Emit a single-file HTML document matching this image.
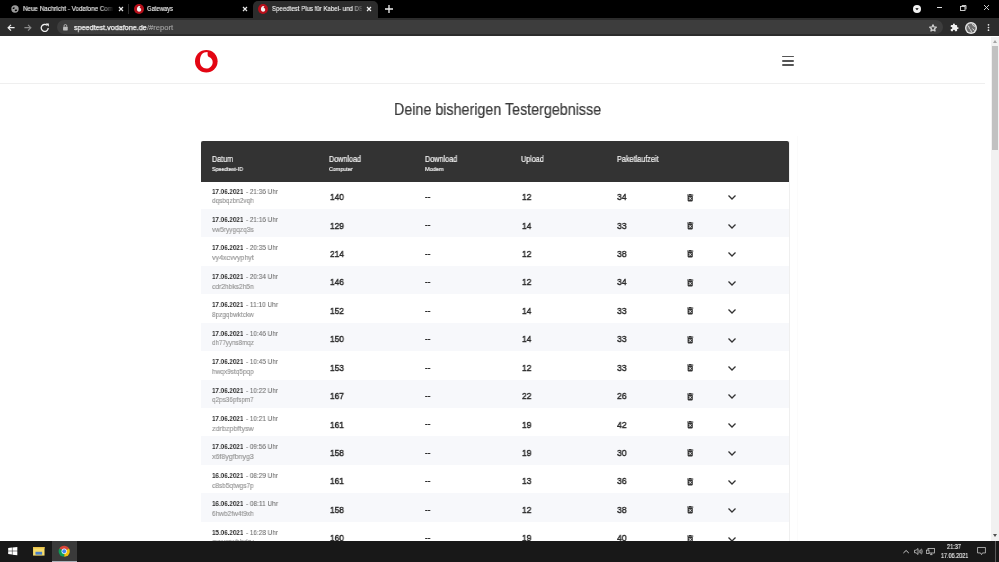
<!DOCTYPE html>
<html><head><meta charset="utf-8">
<style>
*{margin:0;padding:0;box-sizing:border-box}
html,body{width:999px;height:562px;overflow:hidden;background:#fff;font-family:"Liberation Sans",sans-serif}
.abs{position:absolute}
.t{position:absolute;white-space:nowrap;line-height:1;will-change:transform}
svg{position:absolute;overflow:visible}
</style></head>
<body>

<div class="abs" style="left:0;top:0;width:999px;height:18px;background:#000"></div>
<div class="abs" style="left:253px;top:1px;width:125px;height:17px;background:#2c2c2c;border-radius:5px 5px 0 0"></div>
<svg style="left:10.95px;top:5px" width="8" height="8" viewBox="0 0 8 8"><circle cx="4" cy="4" r="3.7" fill="#9a9a9a"/><ellipse cx="2.7" cy="3.1" rx="1.1" ry="0.8" fill="#000" transform="rotate(-30 2.7 3.1)"/><ellipse cx="4.9" cy="5.3" rx="1.2" ry="0.75" fill="#000" transform="rotate(-20 4.9 5.3)"/></svg>
<div class="t" style="left:23.00px;top:5.27px;font-size:7.00px;color:#e8e8e8;font-weight:normal;transform:scaleX(0.8931);transform-origin:0 0;-webkit-text-stroke:0.15px #e8e8e8;">Neue Nachricht - Vodafone Com</div>
<div class="abs" style="left:100px;top:2px;width:14px;height:14px;background:linear-gradient(90deg,rgba(0,0,0,0),#000)"></div>
<svg style="left:118.8px;top:7.2px" width="4" height="4" viewBox="0 0 4 4"><path d="M0 0L4 4M4 0L0 4" stroke="#e8e8e8" stroke-width="1.20"/></svg>
<div class="abs" style="left:128px;top:4px;width:1px;height:10px;background:#2e2e2e"></div>
<svg style="left:133.5px;top:4.0px" width="10.0" height="10.0" viewBox="0 0 20 20"><circle cx="10" cy="10" r="10" fill="#b80f1a"/><path d="M10.6 4.2 C8 4.6 5.8 7 5.8 10.6 C5.8 13.6 7.8 15.6 10.2 15.6 C12.6 15.6 14.4 13.8 14.4 11.6 C14.4 9.2 12.6 8.2 11.2 7.2 C11 5.8 11.6 4.8 13 4.3 C12.2 4.1 11.4 4.1 10.6 4.2Z" fill="#f4f4f4"/></svg>
<div class="t" style="left:147.00px;top:5.27px;font-size:7.00px;color:#e8e8e8;font-weight:normal;transform:scaleX(0.8354);transform-origin:0 0;-webkit-text-stroke:0.15px #e8e8e8;">Gateways</div>
<svg style="left:242.8px;top:7.2px" width="4" height="4" viewBox="0 0 4 4"><path d="M0 0L4 4M4 0L0 4" stroke="#e8e8e8" stroke-width="1.20"/></svg>
<svg style="left:258.2px;top:4.0px" width="10.0" height="10.0" viewBox="0 0 20 20"><circle cx="10" cy="10" r="10" fill="#b80f1a"/><path d="M10.6 4.2 C8 4.6 5.8 7 5.8 10.6 C5.8 13.6 7.8 15.6 10.2 15.6 C12.6 15.6 14.4 13.8 14.4 11.6 C14.4 9.2 12.6 8.2 11.2 7.2 C11 5.8 11.6 4.8 13 4.3 C12.2 4.1 11.4 4.1 10.6 4.2Z" fill="#f4f4f4"/></svg>
<div class="t" style="left:272.00px;top:5.27px;font-size:7.00px;color:#f0f0f0;font-weight:normal;transform:scaleX(0.8698);transform-origin:0 0;-webkit-text-stroke:0.15px #f0f0f0;">Speedtest Plus f&uuml;r Kabel- und DSL</div>
<div class="abs" style="left:352px;top:2px;width:12px;height:14px;background:linear-gradient(90deg,rgba(44,44,44,0),#2c2c2c)"></div>
<div class="abs" style="left:362px;top:2px;width:13px;height:14px;background:#2c2c2c"></div>
<svg style="left:367.0px;top:7.2px" width="4" height="4" viewBox="0 0 4 4"><path d="M0 0L4 4M4 0L0 4" stroke="#f0f0f0" stroke-width="1.20"/></svg>
<svg style="left:385px;top:5px" width="8" height="8" viewBox="0 0 8 8"><path d="M4 0V8M0 4H8" stroke="#f0f0f0" stroke-width="1.3"/></svg>
<svg style="left:912.5px;top:4.8px" width="8" height="8" viewBox="0 0 8 8"><circle cx="4" cy="4" r="4" fill="#f2f2f2"/><path d="M2.3 3.2H5.7L4 5.3Z" fill="#000"/></svg>
<div class="abs" style="left:936.5px;top:7px;width:5.5px;height:0.9px;background:#ddd"></div>
<svg style="left:960px;top:5px" width="7" height="6" viewBox="0 0 7 6"><rect x="0.5" y="1.5" width="4.5" height="4" fill="none" stroke="#ddd" stroke-width="0.9"/><path d="M1.8 0.5H6V4.3" fill="none" stroke="#ddd" stroke-width="0.9"/></svg>
<svg style="left:984.3px;top:5.2px" width="5" height="5" viewBox="0 0 5 5"><path d="M0 0L5 5M5 0L0 5" stroke="#e0e0e0" stroke-width="0.90"/></svg>
<div class="abs" style="left:0;top:17.6px;width:999px;height:18.9px;background:#2c2c2c"></div>
<svg style="left:7.2px;top:23.6px" width="8" height="7.4" viewBox="0 0 10 9"><path d="M9.5 4.5H1.4M5 0.9L1.4 4.5L5 8.1" fill="none" stroke="#f0f0f0" stroke-width="1.5"/></svg>
<svg style="left:24px;top:23.6px" width="8" height="7.4" viewBox="0 0 10 9"><path d="M0.5 4.5H8.6M5 0.9L8.6 4.5L5 8.1" fill="none" stroke="#8a8a8a" stroke-width="1.5"/></svg>
<svg style="left:39.5px;top:22.5px" width="10" height="10" viewBox="0 0 10 10"><path d="M8.2 5A3.5 3.5 0 1 1 7 2.3" fill="none" stroke="#f0f0f0" stroke-width="1.3"/><path d="M5.6 0.5H8.8V3.7Z" fill="#f0f0f0"/></svg>
<div class="abs" style="left:56.5px;top:20px;width:886px;height:14.2px;background:#3d3d3d;border-radius:7.1px"></div>
<svg style="left:63.3px;top:24.2px" width="4.8" height="6.5" viewBox="0 0 6 8"><path d="M1.3 3.4V2.3A1.7 1.7 0 0 1 4.7 2.3V3.4" fill="none" stroke="#bdbdbd" stroke-width="1.1"/><rect x="0.1" y="3.4" width="5.8" height="4.6" rx="0.6" fill="#bdbdbd"/></svg>
<div class="t" style="left:73.80px;top:23.67px;font-size:7.60px;color:#f4f4f4;font-weight:normal;transform:scaleX(0.9466);transform-origin:0 0;-webkit-text-stroke:0.25px #f4f4f4;">speedtest.vodafone.de</div>
<div class="t" style="left:146.80px;top:23.67px;font-size:7.60px;color:#a0a0a0;font-weight:normal;transform:scaleX(1.0003);transform-origin:0 0;-webkit-text-stroke:0.15px #a0a0a0;">/#report</div>
<svg style="left:929.3px;top:23.6px" width="8" height="8" viewBox="0 0 24 24"><path d="M12 2.5l2.9 6.3 6.9.7-5.2 4.6 1.5 6.8L12 17.4l-6.1 3.5 1.5-6.8L2.2 9.5l6.9-.7z" fill="none" stroke="#cfcfcf" stroke-width="4" stroke-linejoin="round"/></svg>
<svg style="left:949.5px;top:22.5px" width="9" height="9" viewBox="0 0 24 24"><path d="M20.5 11H19V7c0-1.1-.9-2-2-2h-4V3.5a2.5 2.5 0 0 0-5 0V5H4c-1.1 0-2 .9-2 2v3.8h1.5a2.7 2.7 0 0 1 0 5.4H2V20c0 1.1.9 2 2 2h3.8v-1.5a2.7 2.7 0 0 1 5.4 0V22H17c1.1 0 2-.9 2-2v-4h1.5a2.5 2.5 0 0 0 0-5z" fill="#f0f0f0"/></svg>
<svg style="left:964.8px;top:21.5px" width="12" height="12" viewBox="0 0 12 12"><circle cx="6" cy="6" r="6" fill="#e6e6e6"/><circle cx="6" cy="6" r="4.6" fill="#6e6e6e"/><path d="M2.6 3.6 Q4.6 4.4 4.2 6.4 Q5.8 7.2 6.6 10.2 M7.4 1.6 Q7 3.6 10.2 4.6 M7.4 6.6 L9.6 8.6" stroke="#dcdcdc" stroke-width="1" fill="none"/></svg>
<svg style="left:986.5px;top:23px" width="3" height="9" viewBox="0 0 3 9"><circle cx="1.5" cy="1.8" r="0.85" fill="#e6e6e6"/><circle cx="1.5" cy="4.5" r="0.85" fill="#e6e6e6"/><circle cx="1.5" cy="7.2" r="0.85" fill="#e6e6e6"/></svg>
<div class="abs" style="left:0;top:36.5px;width:990px;height:504.5px;background:#fff;overflow:hidden">
</div>
<div class="abs" style="left:0;top:83px;width:985px;height:1px;background:#efefef"></div>
<svg style="left:195.3px;top:49.8px" width="22.6" height="22.6" viewBox="0 0 22.6 22.6"><circle cx="11.3" cy="11.3" r="11.3" fill="#e30613"/><path d="M12.6 2.1 C7.4 2.1 4.95 5.2 4.95 11.6 C4.95 15.6 7.8 18.6 11.3 18.6 C14.8 18.6 17.7 15.8 17.7 12.2 C17.7 9.8 16.4 8.2 14.6 7.3 C13.4 6.8 12.6 5.8 12.6 4.4Z" fill="#fff"/></svg>
<div class="abs" style="left:781.5px;top:55.95px;width:12.5px;height:1.4px;background:#555;border-radius:1px"></div>
<div class="abs" style="left:781.5px;top:60.30px;width:12.5px;height:1.4px;background:#555;border-radius:1px"></div>
<div class="abs" style="left:781.5px;top:64.40px;width:12.5px;height:1.4px;background:#555;border-radius:1px"></div>
<div class="t" style="left:394.30px;top:102.04px;font-size:15.90px;color:#3a3a3a;font-weight:normal;transform:scaleX(0.8993);transform-origin:0 0;-webkit-text-stroke:0.2px #3a3a3a;">Deine bisherigen Testergebnisse</div>
<div class="abs" style="left:796.5px;top:135.5px;width:1px;height:406px;background:#fbfbfb"></div>
<div class="abs" style="left:200.5px;top:141.2px;width:589px;height:400px;border-left:1px solid #efefef;border-right:1px solid #efefef"></div>
<div class="abs" style="left:201.2px;top:140.7px;width:588px;height:41.6px;background:#333;border-radius:2px 2px 0 0"></div>
<div class="t" style="left:211.80px;top:154.57px;font-size:8.30px;color:#f4f4f4;font-weight:normal;transform:scaleX(0.8631);transform-origin:0 0;-webkit-text-stroke:0.2px #f4f4f4;">Datum</div>
<div class="t" style="left:211.80px;top:167.01px;font-size:5.90px;color:#f0f0f0;font-weight:normal;transform:scaleX(0.9002);transform-origin:0 0;-webkit-text-stroke:0.2px #f0f0f0;">Speedtest-ID</div>
<div class="t" style="left:329.40px;top:154.57px;font-size:8.30px;color:#f4f4f4;font-weight:normal;transform:scaleX(0.8669);transform-origin:0 0;-webkit-text-stroke:0.2px #f4f4f4;">Download</div>
<div class="t" style="left:329.40px;top:167.01px;font-size:5.90px;color:#f0f0f0;font-weight:normal;transform:scaleX(0.9110);transform-origin:0 0;-webkit-text-stroke:0.2px #f0f0f0;">Computer</div>
<div class="t" style="left:425.10px;top:154.57px;font-size:8.30px;color:#f4f4f4;font-weight:normal;transform:scaleX(0.8723);transform-origin:0 0;-webkit-text-stroke:0.2px #f4f4f4;">Download</div>
<div class="t" style="left:425.10px;top:167.01px;font-size:5.90px;color:#f0f0f0;font-weight:normal;transform:scaleX(0.9505);transform-origin:0 0;-webkit-text-stroke:0.2px #f0f0f0;">Modem</div>
<div class="t" style="left:521.10px;top:154.57px;font-size:8.30px;color:#f4f4f4;font-weight:normal;transform:scaleX(0.8630);transform-origin:0 0;-webkit-text-stroke:0.2px #f4f4f4;">Upload</div>
<div class="t" style="left:616.80px;top:154.57px;font-size:8.30px;color:#f4f4f4;font-weight:normal;transform:scaleX(0.8754);transform-origin:0 0;-webkit-text-stroke:0.2px #f4f4f4;">Paketlaufzeit</div>
<div class="abs" style="left:201.2px;top:182.30px;width:588px;height:26.75px;background:#fff"></div>
<div class="t" style="left:211.90px;top:187.51px;font-size:7.40px;color:#2a2a2a;font-weight:bold;transform:scaleX(0.8451);transform-origin:0 0;">17.06.2021</div>
<div class="t" style="left:246.40px;top:187.51px;font-size:7.40px;color:#707070;font-weight:normal;transform:scaleX(0.8644);transform-origin:0 0;-webkit-text-stroke:0.1px #707070;">- 21:36 Uhr</div>
<div class="t" style="left:211.90px;top:197.28px;font-size:7.90px;color:#999;font-weight:normal;transform:scaleX(0.8133);transform-origin:0 0;-webkit-text-stroke:0.2px #999;">dqsbqzbn2vqh</div>
<div class="t" style="left:329.50px;top:192.19px;font-size:9.90px;color:#2a2a2a;font-weight:normal;transform:scaleX(0.8415);transform-origin:0 0;-webkit-text-stroke:0.45px #2a2a2a;">140</div>
<div class="t" style="left:425.20px;top:193.00px;font-size:8.00px;color:#222;font-weight:bold;transform:scaleX(1.0134);transform-origin:0 0;-webkit-text-stroke:0.2px #222;">--</div>
<div class="t" style="left:521.50px;top:192.19px;font-size:9.90px;color:#2a2a2a;font-weight:normal;transform:scaleX(0.8536);transform-origin:0 0;-webkit-text-stroke:0.45px #2a2a2a;">12</div>
<div class="t" style="left:617.30px;top:192.19px;font-size:9.90px;color:#2a2a2a;font-weight:normal;transform:scaleX(0.8718);transform-origin:0 0;-webkit-text-stroke:0.45px #2a2a2a;">34</div>
<svg style="left:687.1px;top:193.57px" width="6.4" height="7.4" viewBox="0 0 64 74"><rect x="0" y="6" width="64" height="10" rx="3" fill="#333"/><rect x="20" y="0" width="24" height="10" rx="3" fill="#333"/><rect x="6" y="16" width="52" height="58" rx="8" fill="#333"/><path d="M20 32L44 58M44 32L20 58" stroke="#fff" stroke-width="9"/></svg>
<svg style="left:728.1px;top:195.47px" width="8" height="4.6" viewBox="0 0 8 4.6"><path d="M0.5 0.5L4 4L7.5 0.5" fill="none" stroke="#333" stroke-width="1.3"/></svg>
<div class="abs" style="left:201.2px;top:209.00px;width:588px;height:28.48px;background:#f7f8fb"></div>
<div class="t" style="left:211.90px;top:215.94px;font-size:7.40px;color:#2a2a2a;font-weight:bold;transform:scaleX(0.8451);transform-origin:0 0;">17.06.2021</div>
<div class="t" style="left:246.40px;top:215.94px;font-size:7.40px;color:#707070;font-weight:normal;transform:scaleX(0.8644);transform-origin:0 0;-webkit-text-stroke:0.1px #707070;">- 21:16 Uhr</div>
<div class="t" style="left:211.90px;top:225.71px;font-size:7.90px;color:#999;font-weight:normal;transform:scaleX(0.8351);transform-origin:0 0;-webkit-text-stroke:0.2px #999;">vw5ryygqzq3s</div>
<div class="t" style="left:329.50px;top:220.62px;font-size:9.90px;color:#2a2a2a;font-weight:normal;transform:scaleX(0.8415);transform-origin:0 0;-webkit-text-stroke:0.45px #2a2a2a;">129</div>
<div class="t" style="left:425.20px;top:221.43px;font-size:8.00px;color:#222;font-weight:bold;transform:scaleX(1.0134);transform-origin:0 0;-webkit-text-stroke:0.2px #222;">--</div>
<div class="t" style="left:521.50px;top:220.62px;font-size:9.90px;color:#2a2a2a;font-weight:normal;transform:scaleX(0.8536);transform-origin:0 0;-webkit-text-stroke:0.45px #2a2a2a;">14</div>
<div class="t" style="left:617.30px;top:220.62px;font-size:9.90px;color:#2a2a2a;font-weight:normal;transform:scaleX(0.8718);transform-origin:0 0;-webkit-text-stroke:0.45px #2a2a2a;">33</div>
<svg style="left:687.1px;top:222.00px" width="6.4" height="7.4" viewBox="0 0 64 74"><rect x="0" y="6" width="64" height="10" rx="3" fill="#333"/><rect x="20" y="0" width="24" height="10" rx="3" fill="#333"/><rect x="6" y="16" width="52" height="58" rx="8" fill="#333"/><path d="M20 32L44 58M44 32L20 58" stroke="#fff" stroke-width="9"/></svg>
<svg style="left:728.1px;top:223.90px" width="8" height="4.6" viewBox="0 0 8 4.6"><path d="M0.5 0.5L4 4L7.5 0.5" fill="none" stroke="#333" stroke-width="1.3"/></svg>
<div class="abs" style="left:201.2px;top:237.43px;width:588px;height:28.48px;background:#fff"></div>
<div class="t" style="left:211.90px;top:244.37px;font-size:7.40px;color:#2a2a2a;font-weight:bold;transform:scaleX(0.8451);transform-origin:0 0;">17.06.2021</div>
<div class="t" style="left:246.40px;top:244.37px;font-size:7.40px;color:#707070;font-weight:normal;transform:scaleX(0.8644);transform-origin:0 0;-webkit-text-stroke:0.1px #707070;">- 20:35 Uhr</div>
<div class="t" style="left:211.90px;top:254.14px;font-size:7.90px;color:#999;font-weight:normal;transform:scaleX(0.8898);transform-origin:0 0;-webkit-text-stroke:0.2px #999;">vy4xcvvyphyt</div>
<div class="t" style="left:329.50px;top:249.05px;font-size:9.90px;color:#2a2a2a;font-weight:normal;transform:scaleX(0.8415);transform-origin:0 0;-webkit-text-stroke:0.45px #2a2a2a;">214</div>
<div class="t" style="left:425.20px;top:249.86px;font-size:8.00px;color:#222;font-weight:bold;transform:scaleX(1.0134);transform-origin:0 0;-webkit-text-stroke:0.2px #222;">--</div>
<div class="t" style="left:521.50px;top:249.05px;font-size:9.90px;color:#2a2a2a;font-weight:normal;transform:scaleX(0.8536);transform-origin:0 0;-webkit-text-stroke:0.45px #2a2a2a;">12</div>
<div class="t" style="left:617.30px;top:249.05px;font-size:9.90px;color:#2a2a2a;font-weight:normal;transform:scaleX(0.8718);transform-origin:0 0;-webkit-text-stroke:0.45px #2a2a2a;">38</div>
<svg style="left:687.1px;top:250.43px" width="6.4" height="7.4" viewBox="0 0 64 74"><rect x="0" y="6" width="64" height="10" rx="3" fill="#333"/><rect x="20" y="0" width="24" height="10" rx="3" fill="#333"/><rect x="6" y="16" width="52" height="58" rx="8" fill="#333"/><path d="M20 32L44 58M44 32L20 58" stroke="#fff" stroke-width="9"/></svg>
<svg style="left:728.1px;top:252.33px" width="8" height="4.6" viewBox="0 0 8 4.6"><path d="M0.5 0.5L4 4L7.5 0.5" fill="none" stroke="#333" stroke-width="1.3"/></svg>
<div class="abs" style="left:201.2px;top:265.86px;width:588px;height:28.48px;background:#f7f8fb"></div>
<div class="t" style="left:211.90px;top:272.80px;font-size:7.40px;color:#2a2a2a;font-weight:bold;transform:scaleX(0.8451);transform-origin:0 0;">17.06.2021</div>
<div class="t" style="left:246.40px;top:272.80px;font-size:7.40px;color:#707070;font-weight:normal;transform:scaleX(0.8644);transform-origin:0 0;-webkit-text-stroke:0.1px #707070;">- 20:34 Uhr</div>
<div class="t" style="left:211.90px;top:282.57px;font-size:7.90px;color:#999;font-weight:normal;transform:scaleX(0.8422);transform-origin:0 0;-webkit-text-stroke:0.2px #999;">cdr2hbks2h5n</div>
<div class="t" style="left:329.50px;top:277.48px;font-size:9.90px;color:#2a2a2a;font-weight:normal;transform:scaleX(0.8415);transform-origin:0 0;-webkit-text-stroke:0.45px #2a2a2a;">146</div>
<div class="t" style="left:425.20px;top:278.29px;font-size:8.00px;color:#222;font-weight:bold;transform:scaleX(1.0134);transform-origin:0 0;-webkit-text-stroke:0.2px #222;">--</div>
<div class="t" style="left:521.50px;top:277.48px;font-size:9.90px;color:#2a2a2a;font-weight:normal;transform:scaleX(0.8536);transform-origin:0 0;-webkit-text-stroke:0.45px #2a2a2a;">12</div>
<div class="t" style="left:617.30px;top:277.48px;font-size:9.90px;color:#2a2a2a;font-weight:normal;transform:scaleX(0.8718);transform-origin:0 0;-webkit-text-stroke:0.45px #2a2a2a;">34</div>
<svg style="left:687.1px;top:278.86px" width="6.4" height="7.4" viewBox="0 0 64 74"><rect x="0" y="6" width="64" height="10" rx="3" fill="#333"/><rect x="20" y="0" width="24" height="10" rx="3" fill="#333"/><rect x="6" y="16" width="52" height="58" rx="8" fill="#333"/><path d="M20 32L44 58M44 32L20 58" stroke="#fff" stroke-width="9"/></svg>
<svg style="left:728.1px;top:280.76px" width="8" height="4.6" viewBox="0 0 8 4.6"><path d="M0.5 0.5L4 4L7.5 0.5" fill="none" stroke="#333" stroke-width="1.3"/></svg>
<div class="abs" style="left:201.2px;top:294.29px;width:588px;height:28.48px;background:#fff"></div>
<div class="t" style="left:211.90px;top:301.23px;font-size:7.40px;color:#2a2a2a;font-weight:bold;transform:scaleX(0.8451);transform-origin:0 0;">17.06.2021</div>
<div class="t" style="left:246.40px;top:301.23px;font-size:7.40px;color:#707070;font-weight:normal;transform:scaleX(0.8774);transform-origin:0 0;-webkit-text-stroke:0.1px #707070;">- 11:10 Uhr</div>
<div class="t" style="left:211.90px;top:311.00px;font-size:7.90px;color:#999;font-weight:normal;transform:scaleX(0.8136);transform-origin:0 0;-webkit-text-stroke:0.2px #999;">8pzgqbwktckw</div>
<div class="t" style="left:329.50px;top:305.91px;font-size:9.90px;color:#2a2a2a;font-weight:normal;transform:scaleX(0.8415);transform-origin:0 0;-webkit-text-stroke:0.45px #2a2a2a;">152</div>
<div class="t" style="left:425.20px;top:306.72px;font-size:8.00px;color:#222;font-weight:bold;transform:scaleX(1.0134);transform-origin:0 0;-webkit-text-stroke:0.2px #222;">--</div>
<div class="t" style="left:521.50px;top:305.91px;font-size:9.90px;color:#2a2a2a;font-weight:normal;transform:scaleX(0.8536);transform-origin:0 0;-webkit-text-stroke:0.45px #2a2a2a;">14</div>
<div class="t" style="left:617.30px;top:305.91px;font-size:9.90px;color:#2a2a2a;font-weight:normal;transform:scaleX(0.8718);transform-origin:0 0;-webkit-text-stroke:0.45px #2a2a2a;">33</div>
<svg style="left:687.1px;top:307.29px" width="6.4" height="7.4" viewBox="0 0 64 74"><rect x="0" y="6" width="64" height="10" rx="3" fill="#333"/><rect x="20" y="0" width="24" height="10" rx="3" fill="#333"/><rect x="6" y="16" width="52" height="58" rx="8" fill="#333"/><path d="M20 32L44 58M44 32L20 58" stroke="#fff" stroke-width="9"/></svg>
<svg style="left:728.1px;top:309.19px" width="8" height="4.6" viewBox="0 0 8 4.6"><path d="M0.5 0.5L4 4L7.5 0.5" fill="none" stroke="#333" stroke-width="1.3"/></svg>
<div class="abs" style="left:201.2px;top:322.72px;width:588px;height:28.48px;background:#f7f8fb"></div>
<div class="t" style="left:211.90px;top:329.66px;font-size:7.40px;color:#2a2a2a;font-weight:bold;transform:scaleX(0.8451);transform-origin:0 0;">17.06.2021</div>
<div class="t" style="left:246.40px;top:329.66px;font-size:7.40px;color:#707070;font-weight:normal;transform:scaleX(0.8644);transform-origin:0 0;-webkit-text-stroke:0.1px #707070;">- 10:46 Uhr</div>
<div class="t" style="left:211.90px;top:339.43px;font-size:7.90px;color:#999;font-weight:normal;transform:scaleX(0.7866);transform-origin:0 0;-webkit-text-stroke:0.2px #999;">dh77yyns8mqz</div>
<div class="t" style="left:329.50px;top:334.34px;font-size:9.90px;color:#2a2a2a;font-weight:normal;transform:scaleX(0.8415);transform-origin:0 0;-webkit-text-stroke:0.45px #2a2a2a;">150</div>
<div class="t" style="left:425.20px;top:335.15px;font-size:8.00px;color:#222;font-weight:bold;transform:scaleX(1.0134);transform-origin:0 0;-webkit-text-stroke:0.2px #222;">--</div>
<div class="t" style="left:521.50px;top:334.34px;font-size:9.90px;color:#2a2a2a;font-weight:normal;transform:scaleX(0.8536);transform-origin:0 0;-webkit-text-stroke:0.45px #2a2a2a;">14</div>
<div class="t" style="left:617.30px;top:334.34px;font-size:9.90px;color:#2a2a2a;font-weight:normal;transform:scaleX(0.8718);transform-origin:0 0;-webkit-text-stroke:0.45px #2a2a2a;">33</div>
<svg style="left:687.1px;top:335.72px" width="6.4" height="7.4" viewBox="0 0 64 74"><rect x="0" y="6" width="64" height="10" rx="3" fill="#333"/><rect x="20" y="0" width="24" height="10" rx="3" fill="#333"/><rect x="6" y="16" width="52" height="58" rx="8" fill="#333"/><path d="M20 32L44 58M44 32L20 58" stroke="#fff" stroke-width="9"/></svg>
<svg style="left:728.1px;top:337.62px" width="8" height="4.6" viewBox="0 0 8 4.6"><path d="M0.5 0.5L4 4L7.5 0.5" fill="none" stroke="#333" stroke-width="1.3"/></svg>
<div class="abs" style="left:201.2px;top:351.15px;width:588px;height:28.48px;background:#fff"></div>
<div class="t" style="left:211.90px;top:358.09px;font-size:7.40px;color:#2a2a2a;font-weight:bold;transform:scaleX(0.8451);transform-origin:0 0;">17.06.2021</div>
<div class="t" style="left:246.40px;top:358.09px;font-size:7.40px;color:#707070;font-weight:normal;transform:scaleX(0.8644);transform-origin:0 0;-webkit-text-stroke:0.1px #707070;">- 10:45 Uhr</div>
<div class="t" style="left:211.90px;top:367.86px;font-size:7.90px;color:#999;font-weight:normal;transform:scaleX(0.8204);transform-origin:0 0;-webkit-text-stroke:0.2px #999;">hwqx9stq5pqp</div>
<div class="t" style="left:329.50px;top:362.77px;font-size:9.90px;color:#2a2a2a;font-weight:normal;transform:scaleX(0.8415);transform-origin:0 0;-webkit-text-stroke:0.45px #2a2a2a;">153</div>
<div class="t" style="left:425.20px;top:363.58px;font-size:8.00px;color:#222;font-weight:bold;transform:scaleX(1.0134);transform-origin:0 0;-webkit-text-stroke:0.2px #222;">--</div>
<div class="t" style="left:521.50px;top:362.77px;font-size:9.90px;color:#2a2a2a;font-weight:normal;transform:scaleX(0.8536);transform-origin:0 0;-webkit-text-stroke:0.45px #2a2a2a;">12</div>
<div class="t" style="left:617.30px;top:362.77px;font-size:9.90px;color:#2a2a2a;font-weight:normal;transform:scaleX(0.8718);transform-origin:0 0;-webkit-text-stroke:0.45px #2a2a2a;">33</div>
<svg style="left:687.1px;top:364.15px" width="6.4" height="7.4" viewBox="0 0 64 74"><rect x="0" y="6" width="64" height="10" rx="3" fill="#333"/><rect x="20" y="0" width="24" height="10" rx="3" fill="#333"/><rect x="6" y="16" width="52" height="58" rx="8" fill="#333"/><path d="M20 32L44 58M44 32L20 58" stroke="#fff" stroke-width="9"/></svg>
<svg style="left:728.1px;top:366.05px" width="8" height="4.6" viewBox="0 0 8 4.6"><path d="M0.5 0.5L4 4L7.5 0.5" fill="none" stroke="#333" stroke-width="1.3"/></svg>
<div class="abs" style="left:201.2px;top:379.58px;width:588px;height:28.48px;background:#f7f8fb"></div>
<div class="t" style="left:211.90px;top:386.52px;font-size:7.40px;color:#2a2a2a;font-weight:bold;transform:scaleX(0.8451);transform-origin:0 0;">17.06.2021</div>
<div class="t" style="left:246.40px;top:386.52px;font-size:7.40px;color:#707070;font-weight:normal;transform:scaleX(0.8644);transform-origin:0 0;-webkit-text-stroke:0.1px #707070;">- 10:22 Uhr</div>
<div class="t" style="left:211.90px;top:396.29px;font-size:7.90px;color:#999;font-weight:normal;transform:scaleX(0.8065);transform-origin:0 0;-webkit-text-stroke:0.2px #999;">q2ps36pfspm7</div>
<div class="t" style="left:329.50px;top:391.20px;font-size:9.90px;color:#2a2a2a;font-weight:normal;transform:scaleX(0.8415);transform-origin:0 0;-webkit-text-stroke:0.45px #2a2a2a;">167</div>
<div class="t" style="left:425.20px;top:392.01px;font-size:8.00px;color:#222;font-weight:bold;transform:scaleX(1.0134);transform-origin:0 0;-webkit-text-stroke:0.2px #222;">--</div>
<div class="t" style="left:521.50px;top:391.20px;font-size:9.90px;color:#2a2a2a;font-weight:normal;transform:scaleX(0.8536);transform-origin:0 0;-webkit-text-stroke:0.45px #2a2a2a;">22</div>
<div class="t" style="left:617.30px;top:391.20px;font-size:9.90px;color:#2a2a2a;font-weight:normal;transform:scaleX(0.8718);transform-origin:0 0;-webkit-text-stroke:0.45px #2a2a2a;">26</div>
<svg style="left:687.1px;top:392.58px" width="6.4" height="7.4" viewBox="0 0 64 74"><rect x="0" y="6" width="64" height="10" rx="3" fill="#333"/><rect x="20" y="0" width="24" height="10" rx="3" fill="#333"/><rect x="6" y="16" width="52" height="58" rx="8" fill="#333"/><path d="M20 32L44 58M44 32L20 58" stroke="#fff" stroke-width="9"/></svg>
<svg style="left:728.1px;top:394.48px" width="8" height="4.6" viewBox="0 0 8 4.6"><path d="M0.5 0.5L4 4L7.5 0.5" fill="none" stroke="#333" stroke-width="1.3"/></svg>
<div class="abs" style="left:201.2px;top:408.01px;width:588px;height:28.48px;background:#fff"></div>
<div class="t" style="left:211.90px;top:414.95px;font-size:7.40px;color:#2a2a2a;font-weight:bold;transform:scaleX(0.8451);transform-origin:0 0;">17.06.2021</div>
<div class="t" style="left:246.40px;top:414.95px;font-size:7.40px;color:#707070;font-weight:normal;transform:scaleX(0.8644);transform-origin:0 0;-webkit-text-stroke:0.1px #707070;">- 10:21 Uhr</div>
<div class="t" style="left:211.90px;top:424.72px;font-size:7.90px;color:#999;font-weight:normal;transform:scaleX(0.9067);transform-origin:0 0;-webkit-text-stroke:0.2px #999;">zdrbzpbftysw</div>
<div class="t" style="left:329.50px;top:419.63px;font-size:9.90px;color:#2a2a2a;font-weight:normal;transform:scaleX(0.8415);transform-origin:0 0;-webkit-text-stroke:0.45px #2a2a2a;">161</div>
<div class="t" style="left:425.20px;top:420.44px;font-size:8.00px;color:#222;font-weight:bold;transform:scaleX(1.0134);transform-origin:0 0;-webkit-text-stroke:0.2px #222;">--</div>
<div class="t" style="left:521.50px;top:419.63px;font-size:9.90px;color:#2a2a2a;font-weight:normal;transform:scaleX(0.8536);transform-origin:0 0;-webkit-text-stroke:0.45px #2a2a2a;">19</div>
<div class="t" style="left:617.30px;top:419.63px;font-size:9.90px;color:#2a2a2a;font-weight:normal;transform:scaleX(0.8718);transform-origin:0 0;-webkit-text-stroke:0.45px #2a2a2a;">42</div>
<svg style="left:687.1px;top:421.01px" width="6.4" height="7.4" viewBox="0 0 64 74"><rect x="0" y="6" width="64" height="10" rx="3" fill="#333"/><rect x="20" y="0" width="24" height="10" rx="3" fill="#333"/><rect x="6" y="16" width="52" height="58" rx="8" fill="#333"/><path d="M20 32L44 58M44 32L20 58" stroke="#fff" stroke-width="9"/></svg>
<svg style="left:728.1px;top:422.91px" width="8" height="4.6" viewBox="0 0 8 4.6"><path d="M0.5 0.5L4 4L7.5 0.5" fill="none" stroke="#333" stroke-width="1.3"/></svg>
<div class="abs" style="left:201.2px;top:436.44px;width:588px;height:28.48px;background:#f7f8fb"></div>
<div class="t" style="left:211.90px;top:443.38px;font-size:7.40px;color:#2a2a2a;font-weight:bold;transform:scaleX(0.8451);transform-origin:0 0;">17.06.2021</div>
<div class="t" style="left:246.40px;top:443.38px;font-size:7.40px;color:#707070;font-weight:normal;transform:scaleX(0.8644);transform-origin:0 0;-webkit-text-stroke:0.1px #707070;">- 09:56 Uhr</div>
<div class="t" style="left:211.90px;top:453.15px;font-size:7.90px;color:#999;font-weight:normal;transform:scaleX(0.8894);transform-origin:0 0;-webkit-text-stroke:0.2px #999;">x6f8ygfbnyg3</div>
<div class="t" style="left:329.50px;top:448.06px;font-size:9.90px;color:#2a2a2a;font-weight:normal;transform:scaleX(0.8415);transform-origin:0 0;-webkit-text-stroke:0.45px #2a2a2a;">158</div>
<div class="t" style="left:425.20px;top:448.87px;font-size:8.00px;color:#222;font-weight:bold;transform:scaleX(1.0134);transform-origin:0 0;-webkit-text-stroke:0.2px #222;">--</div>
<div class="t" style="left:521.50px;top:448.06px;font-size:9.90px;color:#2a2a2a;font-weight:normal;transform:scaleX(0.8536);transform-origin:0 0;-webkit-text-stroke:0.45px #2a2a2a;">19</div>
<div class="t" style="left:617.30px;top:448.06px;font-size:9.90px;color:#2a2a2a;font-weight:normal;transform:scaleX(0.8718);transform-origin:0 0;-webkit-text-stroke:0.45px #2a2a2a;">30</div>
<svg style="left:687.1px;top:449.44px" width="6.4" height="7.4" viewBox="0 0 64 74"><rect x="0" y="6" width="64" height="10" rx="3" fill="#333"/><rect x="20" y="0" width="24" height="10" rx="3" fill="#333"/><rect x="6" y="16" width="52" height="58" rx="8" fill="#333"/><path d="M20 32L44 58M44 32L20 58" stroke="#fff" stroke-width="9"/></svg>
<svg style="left:728.1px;top:451.34px" width="8" height="4.6" viewBox="0 0 8 4.6"><path d="M0.5 0.5L4 4L7.5 0.5" fill="none" stroke="#333" stroke-width="1.3"/></svg>
<div class="abs" style="left:201.2px;top:464.87px;width:588px;height:28.48px;background:#fff"></div>
<div class="t" style="left:211.90px;top:471.81px;font-size:7.40px;color:#2a2a2a;font-weight:bold;transform:scaleX(0.8451);transform-origin:0 0;">16.06.2021</div>
<div class="t" style="left:246.40px;top:471.81px;font-size:7.40px;color:#707070;font-weight:normal;transform:scaleX(0.8644);transform-origin:0 0;-webkit-text-stroke:0.1px #707070;">- 08:29 Uhr</div>
<div class="t" style="left:211.90px;top:481.58px;font-size:7.90px;color:#999;font-weight:normal;transform:scaleX(0.8276);transform-origin:0 0;-webkit-text-stroke:0.2px #999;">c8sb5qtwgs7p</div>
<div class="t" style="left:329.50px;top:476.49px;font-size:9.90px;color:#2a2a2a;font-weight:normal;transform:scaleX(0.8415);transform-origin:0 0;-webkit-text-stroke:0.45px #2a2a2a;">161</div>
<div class="t" style="left:425.20px;top:477.30px;font-size:8.00px;color:#222;font-weight:bold;transform:scaleX(1.0134);transform-origin:0 0;-webkit-text-stroke:0.2px #222;">--</div>
<div class="t" style="left:521.50px;top:476.49px;font-size:9.90px;color:#2a2a2a;font-weight:normal;transform:scaleX(0.8536);transform-origin:0 0;-webkit-text-stroke:0.45px #2a2a2a;">13</div>
<div class="t" style="left:617.30px;top:476.49px;font-size:9.90px;color:#2a2a2a;font-weight:normal;transform:scaleX(0.8718);transform-origin:0 0;-webkit-text-stroke:0.45px #2a2a2a;">36</div>
<svg style="left:687.1px;top:477.87px" width="6.4" height="7.4" viewBox="0 0 64 74"><rect x="0" y="6" width="64" height="10" rx="3" fill="#333"/><rect x="20" y="0" width="24" height="10" rx="3" fill="#333"/><rect x="6" y="16" width="52" height="58" rx="8" fill="#333"/><path d="M20 32L44 58M44 32L20 58" stroke="#fff" stroke-width="9"/></svg>
<svg style="left:728.1px;top:479.77px" width="8" height="4.6" viewBox="0 0 8 4.6"><path d="M0.5 0.5L4 4L7.5 0.5" fill="none" stroke="#333" stroke-width="1.3"/></svg>
<div class="abs" style="left:201.2px;top:493.30px;width:588px;height:28.48px;background:#f7f8fb"></div>
<div class="t" style="left:211.90px;top:500.24px;font-size:7.40px;color:#2a2a2a;font-weight:bold;transform:scaleX(0.8451);transform-origin:0 0;">16.06.2021</div>
<div class="t" style="left:246.40px;top:500.24px;font-size:7.40px;color:#707070;font-weight:normal;transform:scaleX(0.8774);transform-origin:0 0;-webkit-text-stroke:0.1px #707070;">- 08:11 Uhr</div>
<div class="t" style="left:211.90px;top:510.01px;font-size:7.90px;color:#999;font-weight:normal;transform:scaleX(0.8276);transform-origin:0 0;-webkit-text-stroke:0.2px #999;">6hwb2fw4t9xh</div>
<div class="t" style="left:329.50px;top:504.92px;font-size:9.90px;color:#2a2a2a;font-weight:normal;transform:scaleX(0.8415);transform-origin:0 0;-webkit-text-stroke:0.45px #2a2a2a;">158</div>
<div class="t" style="left:425.20px;top:505.73px;font-size:8.00px;color:#222;font-weight:bold;transform:scaleX(1.0134);transform-origin:0 0;-webkit-text-stroke:0.2px #222;">--</div>
<div class="t" style="left:521.50px;top:504.92px;font-size:9.90px;color:#2a2a2a;font-weight:normal;transform:scaleX(0.8536);transform-origin:0 0;-webkit-text-stroke:0.45px #2a2a2a;">12</div>
<div class="t" style="left:617.30px;top:504.92px;font-size:9.90px;color:#2a2a2a;font-weight:normal;transform:scaleX(0.8718);transform-origin:0 0;-webkit-text-stroke:0.45px #2a2a2a;">38</div>
<svg style="left:687.1px;top:506.30px" width="6.4" height="7.4" viewBox="0 0 64 74"><rect x="0" y="6" width="64" height="10" rx="3" fill="#333"/><rect x="20" y="0" width="24" height="10" rx="3" fill="#333"/><rect x="6" y="16" width="52" height="58" rx="8" fill="#333"/><path d="M20 32L44 58M44 32L20 58" stroke="#fff" stroke-width="9"/></svg>
<svg style="left:728.1px;top:508.20px" width="8" height="4.6" viewBox="0 0 8 4.6"><path d="M0.5 0.5L4 4L7.5 0.5" fill="none" stroke="#333" stroke-width="1.3"/></svg>
<div class="abs" style="left:201.2px;top:521.73px;width:588px;height:28.48px;background:#fff"></div>
<div class="t" style="left:211.90px;top:528.67px;font-size:7.40px;color:#2a2a2a;font-weight:bold;transform:scaleX(0.8451);transform-origin:0 0;">15.06.2021</div>
<div class="t" style="left:246.40px;top:528.67px;font-size:7.40px;color:#707070;font-weight:normal;transform:scaleX(0.8644);transform-origin:0 0;-webkit-text-stroke:0.1px #707070;">- 16:28 Uhr</div>
<div class="t" style="left:211.90px;top:538.44px;font-size:7.90px;color:#999;font-weight:normal;transform:scaleX(0.9068);transform-origin:0 0;-webkit-text-stroke:0.2px #999;">qxwzrwbhdrv</div>
<div class="t" style="left:329.50px;top:533.35px;font-size:9.90px;color:#2a2a2a;font-weight:normal;transform:scaleX(0.8415);transform-origin:0 0;-webkit-text-stroke:0.45px #2a2a2a;">160</div>
<div class="t" style="left:425.20px;top:534.16px;font-size:8.00px;color:#222;font-weight:bold;transform:scaleX(1.0134);transform-origin:0 0;-webkit-text-stroke:0.2px #222;">--</div>
<div class="t" style="left:521.50px;top:533.35px;font-size:9.90px;color:#2a2a2a;font-weight:normal;transform:scaleX(0.8536);transform-origin:0 0;-webkit-text-stroke:0.45px #2a2a2a;">19</div>
<div class="t" style="left:617.30px;top:533.35px;font-size:9.90px;color:#2a2a2a;font-weight:normal;transform:scaleX(0.8718);transform-origin:0 0;-webkit-text-stroke:0.45px #2a2a2a;">40</div>
<svg style="left:687.1px;top:534.73px" width="6.4" height="7.4" viewBox="0 0 64 74"><rect x="0" y="6" width="64" height="10" rx="3" fill="#333"/><rect x="20" y="0" width="24" height="10" rx="3" fill="#333"/><rect x="6" y="16" width="52" height="58" rx="8" fill="#333"/><path d="M20 32L44 58M44 32L20 58" stroke="#fff" stroke-width="9"/></svg>
<svg style="left:728.1px;top:536.63px" width="8" height="4.6" viewBox="0 0 8 4.6"><path d="M0.5 0.5L4 4L7.5 0.5" fill="none" stroke="#333" stroke-width="1.3"/></svg>
<div class="abs" style="left:990.5px;top:36.5px;width:8.5px;height:504.5px;background:#f1f1f1"></div>
<div class="abs" style="left:991.6px;top:46px;width:6.4px;height:104px;background:#c1c1c1"></div>
<svg style="left:992.5px;top:40px" width="4" height="3" viewBox="0 0 4 3"><path d="M0 3L2 0L4 3Z" fill="#a3a3a3"/></svg>
<svg style="left:992.5px;top:534.3px" width="4" height="3" viewBox="0 0 4 3"><path d="M0 0L2 3L4 0Z" fill="#505050"/></svg>
<div class="abs" style="left:0;top:541px;width:999px;height:21px;background:#181818"></div>
<svg style="left:7.7px;top:547px" width="9.5" height="8.2" viewBox="0 0 19 17"><path d="M0 2.3L7.8 1.2V8H0ZM8.8 1.1L19 0V8H8.8ZM0 9H7.8V15.8L0 14.7ZM8.8 9H19V17L8.8 15.9Z" fill="#fff"/></svg>
<svg style="left:33px;top:547px" width="11.6" height="8.6" viewBox="0 0 24 18"><rect x="0" y="0" width="24" height="18" fill="#f6dc6a"/><rect x="0" y="0" width="24" height="3" fill="#e9c24a"/><rect x="5" y="10" width="14" height="6" fill="#4a7fc8"/></svg>
<div class="abs" style="left:52px;top:541px;width:25px;height:21px;background:#3a3a3a"></div>
<div class="abs" style="left:52px;top:561px;width:25px;height:1px;background:#aab0b8"></div>
<svg style="left:58.2px;top:545.4px" width="12.4" height="12.4" viewBox="0 0 24 24"><path d="M12 12L2.6 6.6A11 11 0 0 1 21.4 6.6Z" fill="#db4437"/><path d="M12 12L21.4 6.6A11 11 0 0 1 12 23Z" fill="#f4c20d"/><path d="M12 12L12 23A11 11 0 0 1 2.6 6.6Z" fill="#0f9d58"/><circle cx="12" cy="12" r="5" fill="#fff"/><circle cx="12" cy="12" r="3.8" fill="#4285f4"/></svg>
<svg style="left:902.8px;top:549.8px" width="6.2" height="3.4" viewBox="0 0 6.2 3.4"><path d="M0.4 3L3.1 0.5L5.8 3" fill="none" stroke="#e0e0e0" stroke-width="0.9"/></svg>
<svg style="left:913.8px;top:548px" width="9" height="7" viewBox="0 0 18 14"><path d="M1 4.5H4L8 1V13L4 9.5H1Z" fill="none" stroke="#e0e0e0" stroke-width="1.4"/><path d="M10.5 4.5Q12 7 10.5 9.5M12.8 3Q15 7 12.8 11M15 1.5Q18 7 15 12.5" fill="none" stroke="#e0e0e0" stroke-width="1.3"/></svg>
<svg style="left:926px;top:548px" width="9" height="7.2" viewBox="0 0 18 14"><rect x="4" y="0.8" width="13" height="9" fill="none" stroke="#e0e0e0" stroke-width="1.4"/><rect x="1" y="4" width="5" height="7" fill="#181818" stroke="#e0e0e0" stroke-width="1.3"/><path d="M8 13H13M10.5 10V13" stroke="#e0e0e0" stroke-width="1.3"/></svg>
<div class="t" style="left:947.00px;top:543.11px;font-size:7.20px;color:#f0f0f0;font-weight:normal;transform:scaleX(0.7770);transform-origin:0 0;-webkit-text-stroke:0.15px #f0f0f0;">21:37</div>
<div class="t" style="left:940.80px;top:552.74px;font-size:6.80px;color:#f0f0f0;font-weight:normal;transform:scaleX(0.7992);transform-origin:0 0;-webkit-text-stroke:0.15px #f0f0f0;">17.06.2021</div>
<svg style="left:977px;top:547px" width="9" height="8.4" viewBox="0 0 18 17"><path d="M1 1H17V12H11L9 15.5L7 12H1Z" fill="none" stroke="#e0e0e0" stroke-width="1.4"/></svg>
<div class="abs" style="left:995.3px;top:541px;width:0.9px;height:21px;background:#5a5a5a"></div>
</body></html>
